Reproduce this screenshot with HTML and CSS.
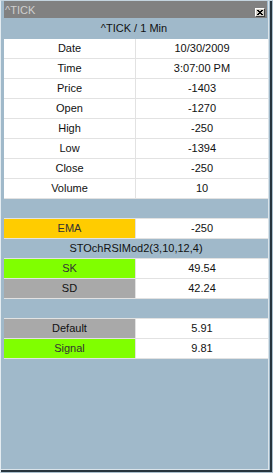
FILE: index.html
```html
<!DOCTYPE html>
<html lang="en">
<head>
  <meta charset="UTF-8" />
  <title>^TICK</title>
  <link rel="stylesheet" href="styles.css">
</head>
<body>
  <div class="window">
    <div class="frame">
      <div class="panel">
        <div class="titlebar">
          <span class="title">^TICK</span>
          <span class="close-btn">
            <svg width="6" height="5" viewBox="0 0 6 5">
              <path d="M0 0h2v1h-2zM4 0h2v1h-2zM1 1h4v1h-4zM2 2h2v1h-2zM1 3h4v1h-4zM0 4h2v1h-2zM4 4h2v1h-2z" fill="#000"/>
            </svg>
          </span>
        </div>
        <div class="caption">^TICK / 1 Min</div>

        <div class="grid">
          <div class="row"><div class="label">Date</div><div class="value">10/30/2009</div></div>
          <div class="row"><div class="label">Time</div><div class="value">3:07:00 PM</div></div>
          <div class="row"><div class="label">Price</div><div class="value">-1403</div></div>
          <div class="row"><div class="label">Open</div><div class="value">-1270</div></div>
          <div class="row"><div class="label">High</div><div class="value">-250</div></div>
          <div class="row"><div class="label">Low</div><div class="value">-1394</div></div>
          <div class="row"><div class="label">Close</div><div class="value">-250</div></div>
          <div class="row"><div class="label">Volume</div><div class="value">10</div></div>

          <div class="row gap"></div>
          <div class="row"><div class="label yellow">EMA</div><div class="value">-250</div></div>
          <div class="row section">STOchRSIMod2(3,10,12,4)</div>
          <div class="row"><div class="label green">SK</div><div class="value">49.54</div></div>
          <div class="row"><div class="label gray">SD</div><div class="value">42.24</div></div>

          <div class="row gap"></div>
          <div class="row"><div class="label gray">Default</div><div class="value">5.91</div></div>
          <div class="row"><div class="label green">Signal</div><div class="value">9.81</div></div>
        </div>
      </div>
    </div>
  </div>
</body>
</html>
```

FILE: styles.css
```css
body {
  margin: 0;
  padding: 0;
  font-family: 'Liberation Sans', Arial, sans-serif;
  font-size: 11px;
  color: #111;
  background-color: #a0b9ca;
}

.window {
  width: 273px;
  height: 473px;
  box-sizing: border-box;
  display: flex;
  background-color: #a0b9ca;
  border-left: 1px solid #e4ecf1;
  border-top: 1px solid #c4d4df;
  border-right: 1px solid #aabfcd;
  border-bottom: 1px solid #aabfcd;
}

.frame {
  flex: 1;
  display: flex;
  border-right: 2px solid #27343d;
  border-bottom: 2px solid #27343d;
}

.panel {
  flex: 1;
  margin-right: 1px;
  padding-left: 3px;
  border-right: 1px solid #dbe4ea;
  border-bottom: 1px solid #dbe4ea;
}

.titlebar {
  height: 17px;
  margin-right: 1px;
  background-color: #818181;
  display: flex;
  align-items: center;
  justify-content: space-between;
}

.title {
  color: #cfcfcf;
  padding-left: 1px;
}

.close-btn {
  width: 10px;
  height: 9px;
  box-sizing: border-box;
  margin-right: 2px;
  margin-top: 5px;
  background-color: #d4d0c8;
  border-top: 1px solid #ffffff;
  border-left: 1px solid #ffffff;
  border-right: 1px solid #404040;
  border-bottom: 1px solid #404040;
  display: flex;
  align-items: center;
  justify-content: center;
}

.close-btn svg {
  display: block;
}

.caption {
  height: 21px;
  line-height: 21px;
  text-align: center;
  padding-right: 4px;
}

.grid {
  width: 264px;
  background-color: #ffffff;
}

.row {
  display: flex;
  height: 20px;
  box-sizing: border-box;
  border-bottom: 1px solid #e2e2e2;
  line-height: 19px;
}

.label {
  width: 132px;
  box-sizing: border-box;
  border-right: 1px solid #e2e2e2;
  text-align: center;
}

.value {
  flex: 1;
  text-align: center;
}

.gap {
  background-color: #a0b9ca;
}

.section {
  background-color: #a0b9ca;
  justify-content: center;
}

.yellow {
  background-color: #ffcc00;
  color: #333;
}

.green {
  background-color: #80ff00;
  color: #333;
}

.gray {
  background-color: #a9a9a9;
}
```
